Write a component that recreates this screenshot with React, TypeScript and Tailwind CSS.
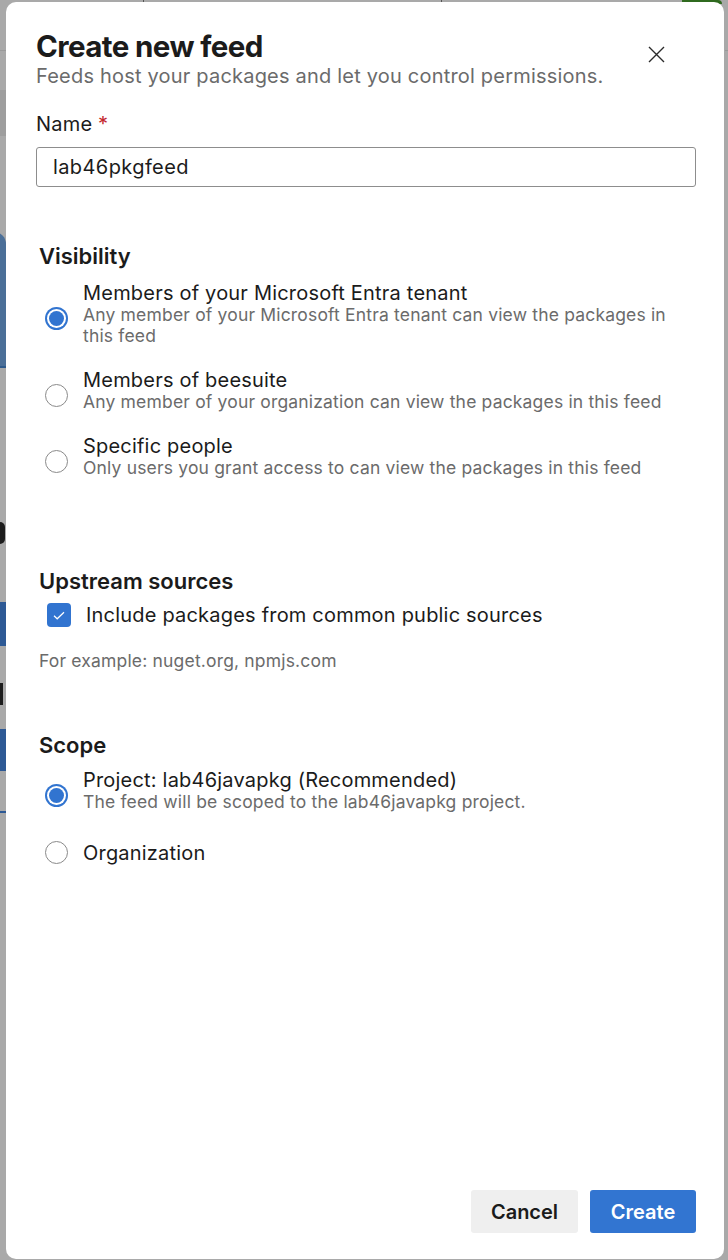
import { useState } from "react";

type Option = {
  id: string;
  label: string;
  description?: string;
};

const visibilityOptions: Option[] = [
  {
    id: "tenant",
    label: "Members of your Microsoft Entra tenant",
    description: "Any member of your Microsoft Entra tenant can view the packages in this feed",
  },
  {
    id: "org",
    label: "Members of beesuite",
    description: "Any member of your organization can view the packages in this feed",
  },
  {
    id: "people",
    label: "Specific people",
    description: "Only users you grant access to can view the packages in this feed",
  },
];

const scopeOptions: Option[] = [
  {
    id: "project",
    label: "Project: lab46javapkg (Recommended)",
    description: "The feed will be scoped to the lab46javapkg project.",
  },
  { id: "organization", label: "Organization" },
];

export default function App() {
  const [name, setName] = useState("lab46pkgfeed");
  const [visibility, setVisibility] = useState("tenant");
  const [scope, setScope] = useState("project");
  const [upstream, setUpstream] = useState(true);

  return (
    <div className="relative h-[1260px] w-full overflow-hidden bg-[#a9a9a9] font-['Inter',sans-serif] text-[#1b1b1b]">
      {/* dimmed page behind the dialog */}
      <div className="absolute left-0 top-[50px] h-px w-[6px] bg-[#9a9a9a]" />
      <div className="absolute left-0 top-[90px] h-[46px] w-[6px] bg-[#9e9e9e]" />
      <div className="absolute left-[-20px] top-[232px] h-[136px] w-[26px] rounded-tr-[12px] border-b-2 border-[#2e5a8c] bg-[#4b6f98]" />
      <div className="absolute left-0 top-[522px] h-[22px] w-[5px] rounded-r-full bg-[#1c1c1c]" />
      <div className="absolute left-0 top-[602px] h-[44px] w-[6px] bg-[#2d5995]" />
      <div className="absolute left-0 top-[683px] h-[22px] w-[3px] bg-[#1c1c1c]" />
      <div className="absolute left-0 top-[729px] h-[42px] w-[6px] bg-[#2d5995]" />
      <div className="absolute left-0 top-[811px] h-[2px] w-[6px] bg-[#2d5995]" />
      <div className="absolute left-[143px] top-0 h-[3px] w-px bg-[#555]" />
      <div className="absolute left-[441px] top-0 h-[3px] w-px bg-[#555]" />
      <div className="absolute left-[682px] top-0 h-[4px] w-[40px] rounded-tr-[10px] bg-[#2f6a1f]" />
      <div className="absolute right-0 top-[50px] h-px w-[3px] bg-[#999]" />

      <div className="absolute left-[6px] top-[2px] flex h-[1257px] w-[718px] flex-col rounded-[10px] bg-white pl-[30px] pr-[28px] pt-[26px] pb-[26px]">
        <div className="flex items-start justify-between">
          <div>
            <h1 className="text-[29.5px] font-bold leading-[36px] tracking-[-0.02em] text-[#1b1b1b]">Create new feed</h1>
            <p className="text-[20px] leading-[24px] tracking-[0.01em] text-[#6b6b6b]">
              Feeds host your packages and let you control permissions.
            </p>
          </div>
          <button type="button" className="mr-[31px] mt-[17px] flex h-[18px] w-[18px] items-center justify-center text-[#2b2b2b]">
            <svg width="17" height="17" viewBox="0 0 17 17" fill="none" stroke="currentColor" strokeWidth="1.4">
              <path d="M1 1L16 16M16 1L1 16" />
            </svg>
          </button>
        </div>

        <label className="mt-[24px] text-[20px] leading-[24px] tracking-[0.01em]">
          Name <span className="text-[#c4262e]">*</span>
        </label>
        <input
          value={name}
          onChange={(e) => setName(e.target.value)}
          className="mt-[11px] h-[40px] w-full rounded-[3px] border border-[#8d8d8d] px-[16px] text-[20px] tracking-[0.02em] text-[#1b1b1b] outline-none"
        />

        <section className="mt-[56px] pl-[3px]">
          <h2 className="text-[22px] font-semibold leading-[26px]">Visibility</h2>
          <div className="mt-[13px] flex flex-col gap-[23px]">
            {visibilityOptions.map((o) => (
              <RadioRow key={o.id} option={o} checked={visibility === o.id} onSelect={() => setVisibility(o.id)} />
            ))}
          </div>
        </section>

        <section className="mt-[90px] pl-[3px]">
          <h2 className="text-[22px] font-semibold leading-[26px]">Upstream sources</h2>
          <label className="mt-[8px] flex items-center gap-[15px] pl-[8px]">
            <button
              type="button"
              onClick={() => setUpstream(!upstream)}
              className={
                upstream
                  ? "flex h-[24px] w-[24px] items-center justify-center rounded-[4px] bg-[#3174d0]"
                  : "flex h-[24px] w-[24px] items-center justify-center rounded-[4px] border border-[#8d8d8d] bg-white"
              }
            >
              {upstream ? (
                <svg width="12" height="9" viewBox="0 0 12 9" fill="none" stroke="white" strokeWidth="1.2">
                  <path d="M1 4.8L4.2 7.8L11 1.2" />
                </svg>
              ) : null}
            </button>
            <span className="text-[20px] leading-[26px] tracking-[0.01em]">Include packages from common public sources</span>
          </label>
          <p className="mt-[22px] text-[17.5px] leading-[22px] tracking-[0.01em] text-[#6b6b6b]">
            For example: nuget.org, npmjs.com
          </p>
        </section>

        <section className="mt-[60px] pl-[3px]">
          <h2 className="text-[22px] font-semibold leading-[26px]">Scope</h2>
          <div className="mt-[11px] flex flex-col gap-[29px]">
            {scopeOptions.map((o) => (
              <RadioRow key={o.id} option={o} checked={scope === o.id} onSelect={() => setScope(o.id)} />
            ))}
          </div>
        </section>

        <div className="mt-auto flex justify-end gap-[12px]">
          <button type="button" className="h-[43px] w-[107px] rounded-[3px] bg-[#efefef] text-[20px] font-semibold text-[#1b1b1b]">
            Cancel
          </button>
          <button type="button" className="h-[43px] w-[106px] rounded-[3px] bg-[#3275d1] text-[20px] font-semibold text-white">
            Create
          </button>
        </div>
      </div>
    </div>
  );
}

function RadioRow({ option, checked, onSelect }: { option: Option; checked: boolean; onSelect: () => void }) {
  return (
    <div className="flex cursor-pointer items-center gap-[15px] pl-[6px]" onClick={onSelect}>
      <span
        className={
          (option.description ? "mt-[9px] " : "") +
          (checked
            ? "flex h-[23px] w-[23px] shrink-0 items-center justify-center rounded-full bg-[#3174d0]"
            : "flex h-[23px] w-[23px] shrink-0 items-center justify-center rounded-full border border-[#8a8a8a] bg-white")
        }
      >
        {checked ? (
          <span className="flex h-[19px] w-[19px] items-center justify-center rounded-full bg-white">
            <span className="h-[15px] w-[15px] rounded-full bg-[#3174d0]" />
          </span>
        ) : null}
      </span>
      <div className="min-w-0 flex-1">
        <div className="text-[20px] leading-[22px] tracking-[0.01em]">{option.label}</div>
        {option.description ? (
          <div className="text-[17.5px] leading-[21px] tracking-[0.01em] text-[#6b6b6b]">{option.description}</div>
        ) : null}
      </div>
    </div>
  );
}
